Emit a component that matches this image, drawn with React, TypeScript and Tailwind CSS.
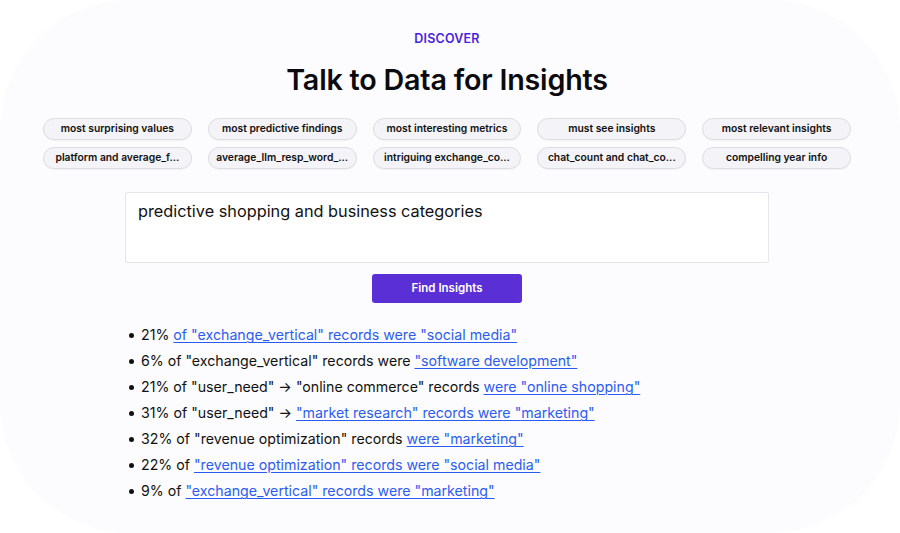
import React from "react";

const chips = [
  "most surprising values",
  "most predictive findings",
  "most interesting metrics",
  "must see insights",
  "most relevant insights",
  "platform and average_f...",
  "average_llm_resp_word_...",
  "intriguing exchange_co...",
  "chat_count and chat_co...",
  "compelling year info",
];

type Item = { plain: string; link: string };

const insights: Item[] = [
  { plain: "21% ", link: 'of "exchange_vertical" records were "social media"' },
  { plain: '6% of "exchange_vertical" records were ', link: '"software development"' },
  { plain: '21% of "user_need" → "online commerce" records ', link: 'were "online shopping"' },
  { plain: '31% of "user_need" → ', link: '"market research" records were "marketing"' },
  { plain: '32% of "revenue optimization" records ', link: 'were "marketing"' },
  { plain: "22% of ", link: '"revenue optimization" records were "social media"' },
  { plain: "9% of ", link: '"exchange_vertical" records were "marketing"' },
];

export default function App() {
  return (
    <div
      className="w-[900px] h-[533px] bg-white overflow-hidden"
      style={{ fontFamily: "Inter, 'Noto Sans', sans-serif" }}
    >
      <div className="w-full h-full bg-[#fcfcfe] rounded-[130px] flex flex-col items-center pt-[31px] pr-[6px]">
        <div className="text-[12.5px] font-semibold tracking-[0.2px] text-[#4a1fe0] leading-[16px]">
          DISCOVER
        </div>
        <h1 className="mt-[16px] text-[28.7px] font-semibold text-[#0b0b0f] leading-[34px] tracking-[-0.2px]">
          Talk to Data for Insights
        </h1>
        <div className="mt-[21px] grid grid-cols-5 gap-x-[16px] gap-y-[7px] w-[808px]">
          {chips.map((c) => (
            <div
              key={c}
              className="h-[22px] rounded-full border border-[#dedde3] bg-[#f4f3f7] flex items-center justify-center text-[10.3px] font-semibold text-[#111] shadow-[0_1px_1px_rgba(0,0,0,0.04)]"
            >
              {c}
            </div>
          ))}
        </div>
        <div className="mt-[23px] w-[644px] h-[71px] bg-white border border-[#e6e5ea] rounded-[2px] px-[12px] pt-[7px] text-[16.3px] text-[#111] leading-[22px]">
          predictive shopping and business categories
        </div>
        <button className="mt-[11px] w-[150px] h-[29px] rounded-[3px] bg-[#5a2fd6] text-white text-[11.5px] font-semibold">
          Find Insights
        </button>
        <ul className="mt-[19px] w-[644px] pl-[4px] flex flex-col">
          {insights.map((it, i) => (
            <li
              key={i}
              className="flex items-center h-[26px] text-[14.2px] text-[#111] whitespace-pre"
            >
              <span className="w-[5px] h-[5px] rounded-full bg-[#111] mr-[7px]" />
              <span>{it.plain}</span>
              <a className="text-[#2b5cf2] underline underline-offset-[2px] decoration-[1px]">
                {it.link}
              </a>
            </li>
          ))}
        </ul>
      </div>
    </div>
  );
}
